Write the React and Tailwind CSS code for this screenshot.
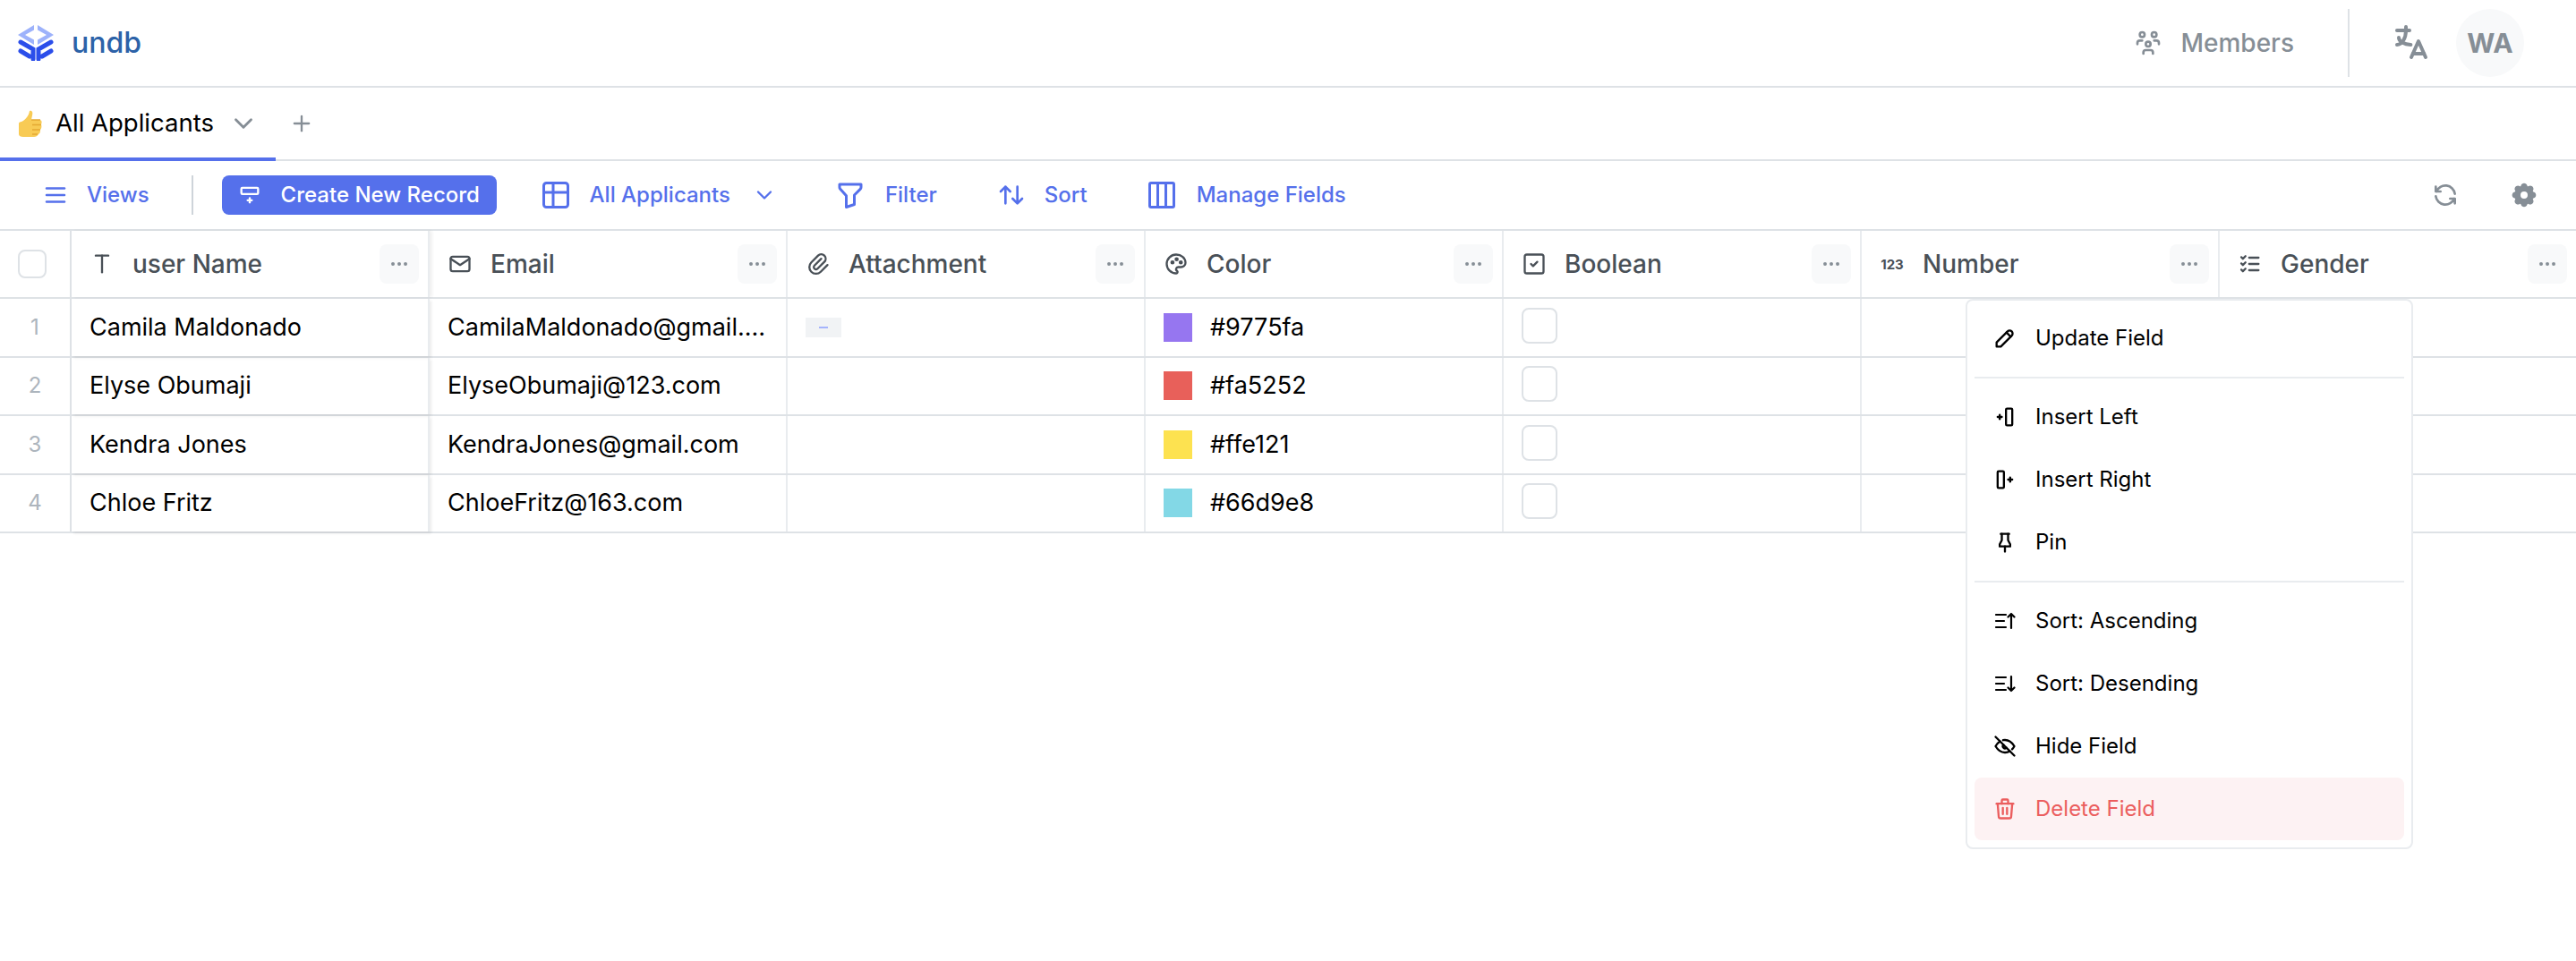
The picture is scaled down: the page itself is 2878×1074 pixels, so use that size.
import {
  TbUsersGroup, TbLanguage, TbRefresh, TbSettingsFilled, TbMenu2, TbRowInsertBottom, TbTable, TbChevronDown,
  TbFilter, TbArrowsSort, TbColumns3, TbLetterT, TbMail, TbPaperclip, TbPalette, TbSquareCheck,
  TbListCheck, TbPencil, TbColumnInsertLeft, TbColumnInsertRight, TbPinned, TbEyeOff, TbTrash, TbDots, TbPlus,
} from 'react-icons/tb';

const Logo = () => (
  <svg width="40" height="40" viewBox="0 0 40 40">
    <path d="M18 0L0 11l18 11v-5.500L8 11l10-5.500zM22 0l18 11-18 11v-5.500L32 11 22 5.500z" fill="#9db2fb" />
    <path d="M3 19l14 8v11M3 29l10 6M37 19l-14 8v11M37 29l-10 6" fill="none" stroke="#2b4eea" strokeWidth="5" strokeLinecap="round" />
  </svg>
);

const Thumb = () => (
  <svg width="28" height="30" viewBox="0 0 28 30">
    <path d="M13 1c3-1 4 2 3 5l-1 5h9c3 0 3 3 2 5 1 3 0 5-1 6 0 2 0 4-2 5-1 2-3 3-5 3H6c-3 0-5-1-5-3V15c0-1 1-2 3-2 4-2 8-6 9-12z" fill="#f8cb55" />
    <path d="M15 11h10M16 16.500h10M16 22h9M16 27h6" stroke="#e3a933" strokeWidth="1.300" fill="none" />
  </svg>
);

const SortIcon = ({ down }) => (
  <svg width="24" height="24" viewBox="0 0 24 24" fill="none" stroke="currentColor" strokeWidth="2.200" strokeLinecap="round" strokeLinejoin="round">
    <path d="M2 5h11M2 12h9M2 19h11" />
    {down ? <path d="M19 4v16M15.500 16.500L19 20l3.500-3.500" /> : <path d="M19 20V4M15.500 7.500L19 4l3.500 3.500" />}
  </svg>
);

// the number field's icon is just small text
const NumberIcon = () => (
  <span className="w-7 shrink-0 text-[15px] leading-none font-bold text-center">123</span>
);

const columns = [
  { name: 'user Name', icon: TbLetterT, frozen: true },
  { name: 'Email', icon: TbMail },
  { name: 'Attachment', icon: TbPaperclip },
  { name: 'Color', icon: TbPalette },
  { name: 'Boolean', icon: TbSquareCheck },
  { name: 'Number', icon: NumberIcon },
  { name: 'Gender', icon: TbListCheck },
];

const rows = [
  { id: 1, name: 'Camila Maldonado', email: 'CamilaMaldonado@gmail.com', color: '#9775fa', swatch: '#9676f0', file: true },
  { id: 2, name: 'Elyse Obumaji', email: 'ElyseObumaji@123.com', color: '#fa5252', swatch: '#e8605a' },
  { id: 3, name: 'Kendra Jones', email: 'KendraJones@gmail.com', color: '#ffe121', swatch: '#fde250' },
  { id: 4, name: 'Chloe Fritz', email: 'ChloeFritz@163.com', color: '#66d9e8', swatch: '#83d8e6' },
];

const ToolItem = ({ icon: Icon, label, size = 32, gap = 'gap-[21px]' }) => (
  <div className={`flex items-center ${gap} text-[#5570eb] text-[24px] font-medium`}>
    <Icon size={size} />
    <span>{label}</span>
  </div>
);

const HeaderCell = ({ col }) => {
  const Icon = col.icon;
  return (
    <div className={`w-[400px] shrink-0 flex items-center border-r-2 border-[#e9ecef] pl-5 pr-2.5 text-[#495057] ${col.frozen ? 'border-[#dee2e6] shadow-[3px_0_3px_rgba(0,0,0,0.06)] relative' : ''}`}>
      <Icon size={28} className="shrink-0" />
      <span className="ml-[20px] text-[28px] font-medium flex-1">{col.name}</span>
      <div className="w-11 h-11 rounded-lg bg-[#f8f9fa] flex items-center justify-center text-[#868e96]">
        <TbDots size={24} />
      </div>
    </div>
  );
};

const Cell = ({ children, frozen }) => (
  <div className={`w-[400px] shrink-0 flex items-center border-r-2 border-[#e9ecef] px-5 text-[27px] text-black ${frozen ? 'border-[#dee2e6] shadow-[2px_2px_3px_rgba(0,0,0,0.08)] relative' : ''}`}>
    {children}
  </div>
);

const MenuItem = ({ icon, label, danger }) => (
  <div className={`h-[70px] flex items-center pl-5 rounded-lg text-[24px] ${danger ? 'bg-[#fdf2f3] text-[#eb5e5e]' : 'text-black'}`}>
    <span className="w-7 mr-5 shrink-0 flex items-center justify-center">{icon}</span>
    <span>{label}</span>
  </div>
);

const App = () => (
  <div className="relative w-full h-screen overflow-hidden bg-white font-['Inter',sans-serif]">
    <div className="h-[98px] flex items-center justify-between border-b-2 border-[#dee2e6] pl-5 pr-[58px]">
      <div className="flex items-center gap-5">
        <Logo />
        <span className="text-[32px] font-medium text-[#2c62a8]">undb</span>
      </div>
      <div className="flex items-center text-[#868e96]">
        <TbUsersGroup size={32} />
        <span className="ml-5 text-[28px] font-medium">Members</span>
        <div className="ml-[60px] w-0.5 h-[76px] bg-[#dee2e6]" />
        <TbLanguage size={48} className="ml-[45px]" />
        <div className="ml-[26px] w-[76px] h-[76px] rounded-full bg-[#f8f9fa] flex items-center justify-center text-[30px] font-bold">WA</div>
      </div>
    </div>

    <div className="relative h-[82px] flex items-center border-b-2 border-[#dee2e6]">
      <div className="absolute left-0 -bottom-0.5 w-[308px] h-1 bg-[#5570eb]" />
      <div className="flex items-center pl-5">
        <Thumb />
        <span className="ml-3.5 text-[27.5px] text-black">All Applicants</span>
        <TbChevronDown size={34} className="ml-4 text-[#868e96]" />
        <TbPlus size={28} className="ml-[34px] text-[#868e96]" />
      </div>
    </div>

    <div className="h-[78px] flex items-center justify-between border-b-2 border-[#dee2e6] pl-[47px] pr-[42px]">
      <div className="flex items-center">
        <ToolItem icon={TbMenu2} size={30} gap="gap-5" label="Views" />
        <div className="ml-[47px] w-0.5 h-11 bg-[#ced4da]" />
        <div className="ml-[32px] h-11 w-[307px] rounded-lg bg-[#5570eb] text-white flex items-center pl-[17px] gap-[21px] text-[24px] font-medium">
          <TbRowInsertBottom size={28} />
          <span>Create New Record</span>
        </div>
        <div className="ml-[48px]"><ToolItem icon={TbTable} size={36} gap="gap-5" label="All Applicants" /></div>
        <TbChevronDown size={28} className="ml-[24px] text-[#5570eb]" />
        <div className="ml-[64px]"><ToolItem icon={TbFilter} size={36} label="Filter" /></div>
        <div className="ml-[67px]"><ToolItem icon={TbArrowsSort} label="Sort" /></div>
        <div className="ml-[65px]"><ToolItem icon={TbColumns3} size={36} label="Manage Fields" /></div>
      </div>
      <div className="flex items-center gap-14 text-[#868e96]">
        <TbRefresh size={32} />
        <TbSettingsFilled size={32} />
      </div>
    </div>

    <div className="w-[2880px]">
      <div className="h-[76px] flex border-b-2 border-[#dee2e6]">
        <div className="w-20 shrink-0 flex items-center justify-center border-r-2 border-[#dee2e6]">
          <div className="w-8 h-8 mr-1.5 rounded-lg border-2 border-[#dee2e6]" />
        </div>
        {columns.map(col => <HeaderCell key={col.name} col={col} />)}
      </div>
      {rows.map(row => (
        <div key={row.id} className="h-[65.5px] flex border-b-2 border-[#dee2e6]">
          <div className="w-20 shrink-0 flex items-center justify-center border-r-2 border-[#dee2e6] text-[24px] text-[#adb5bd]">{row.id}</div>
          <Cell frozen>{row.name}</Cell>
          <Cell><span className="truncate">{row.email}</span></Cell>
          <Cell>
            {row.file && (
              <div className="w-10 h-[22px] bg-[#f1f3f5] flex items-center justify-center">
                <div className="w-2.5 h-0.5 bg-[#a5b4fc]" />
              </div>
            )}
          </Cell>
          <Cell>
            <div className="w-8 h-8 shrink-0" style={{ backgroundColor: row.swatch }} />
            <span className="ml-5">{row.color}</span>
          </Cell>
          <Cell><div className="w-10 h-10 rounded-lg border-2 border-[#dee2e6] -mt-1" /></Cell>
          <Cell />
          <Cell />
        </div>
      ))}
    </div>

    <div className="absolute left-[2196px] top-[334px] w-[500px] bg-white rounded-lg border-2 border-[#e9ecef] px-2 pt-[7px] pb-2">
      <MenuItem icon={<TbPencil size={28} />} label="Update Field" />
      <div className="h-0.5 my-2 bg-[#e9ecef]" />
      <MenuItem icon={<TbColumnInsertLeft size={30} />} label="Insert Left" />
      <MenuItem icon={<TbColumnInsertRight size={30} />} label="Insert Right" />
      <MenuItem icon={<TbPinned size={30} />} label="Pin" />
      <div className="h-0.5 my-2 bg-[#e9ecef]" />
      <MenuItem icon={<SortIcon />} label="Sort: Ascending" />
      <MenuItem icon={<SortIcon down />} label="Sort: Desending" />
      <MenuItem icon={<TbEyeOff size={30} />} label="Hide Field" />
      <MenuItem icon={<TbTrash size={28} />} label="Delete Field" danger />
    </div>
  </div>
);

export default App;
